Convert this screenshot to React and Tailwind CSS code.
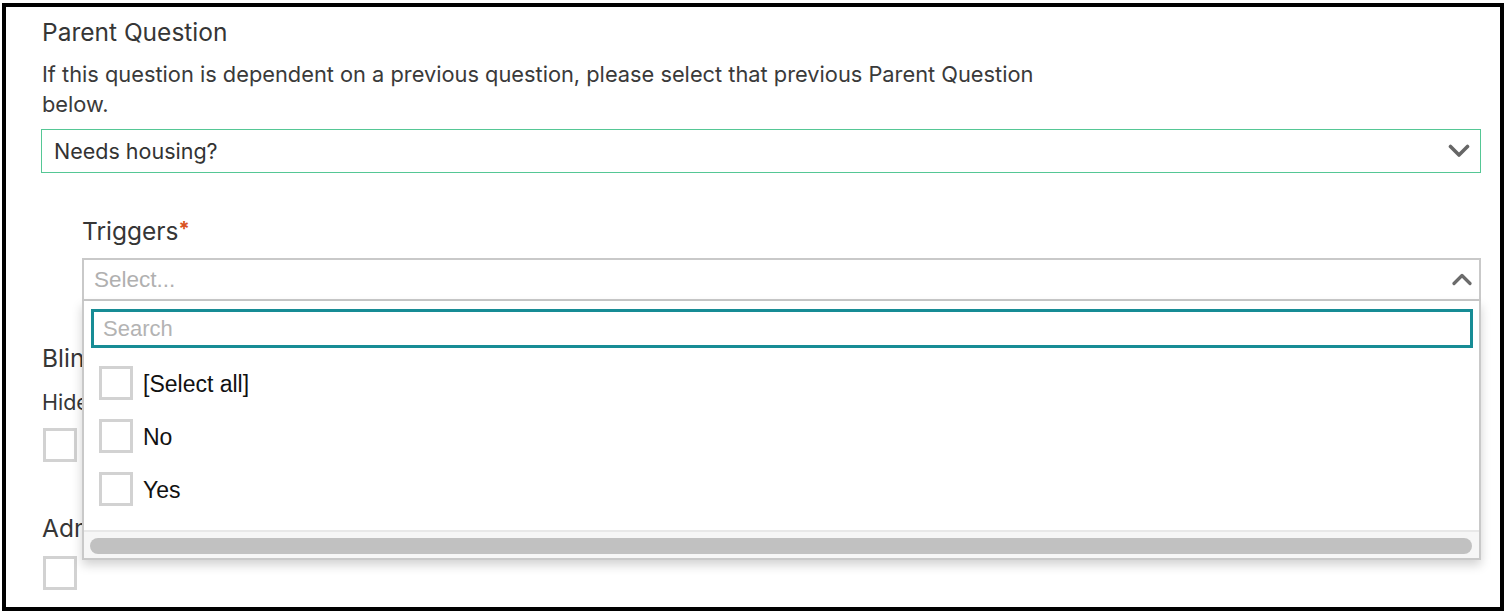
import React from "react";

function ChevronDown() {
  return (
    <svg width="22" height="14" viewBox="0 0 22 14" className="block">
      <polyline points="2.5,2.5 11,11 19.5,2.5" fill="none" stroke="#666666" strokeWidth="3.6" strokeLinecap="round" strokeLinejoin="round" />
    </svg>
  );
}

function ChevronUp() {
  return (
    <svg width="20" height="13" viewBox="0 0 20 13" className="block">
      <polyline points="2,10.5 10,2.5 18,10.5" fill="none" stroke="#6b6b6b" strokeWidth="3.2" strokeLinecap="round" strokeLinejoin="round" />
    </svg>
  );
}

function Box() {
  return <div className="w-[34px] h-[34px] border-[3px] border-[#d2d2d2] bg-white shrink-0" />;
}

export default function App() {
  const sans = { fontFamily: "Inter, 'Noto Sans', sans-serif" };
  const helv = { fontFamily: "'Liberation Sans', Arial, sans-serif" };
  return (
    <div className="w-[1506px] h-[614px] bg-white overflow-hidden">
      <div className="ml-[2px] mt-[3px] w-[1502px] h-[608px] border-4 border-black overflow-hidden">
        <div className="pl-[35px] pt-[9px] text-[#363636]" style={sans}>
          <div className="text-[24.5px] leading-[32px] pl-[1px]">Parent Question</div>
          <div className="mt-[11px] text-[21.8px] leading-[30px] max-w-[1010px] pl-[1px] text-[#3a3a3a]">
            If this question is dependent on a previous question, please select that previous Parent Question below.
          </div>
          <div className="mt-[10px] w-[1440px] h-[44px] border border-[#55c795] flex items-center justify-between pl-[12px] pr-[10px]">
            <span className="text-[21.5px] text-[#333]">Needs housing?</span>
            <ChevronDown />
          </div>

          <div className="relative">
            <div className="ml-[41px] mt-[42px]">
              <div className="text-[24.5px] leading-[32px]">
                Triggers<span className="text-[#d9531e] text-[20px] font-bold align-top leading-[28px]">*</span>
              </div>
              <div className="relative mt-[11px] w-[1399px]">
                <div className="h-[43px] border-2 border-[#c9c9c9] flex items-center justify-between pl-[10px] pr-[7px]">
                  <span className="text-[22.5px] text-[#b0b0b0]" style={helv}>Select...</span>
                  <ChevronUp />
                </div>
                <div className="absolute left-0 right-0 top-full z-10 bg-white border-2 border-t-0 border-[#c9c9c9] shadow-[0_5px_10px_rgba(0,0,0,0.18)]" style={helv}>
                  <div className="pt-[8px] pl-[7px] pr-[6px]">
                    <div className="h-[39px] border-[3px] border-[#178c95] flex items-center pl-[9px]">
                      <span className="text-[22px] text-[#b3b3b3]">Search</span>
                    </div>
                  </div>
                  <div className="pt-[8px] pb-[15px] pl-[15px]">
                    {["[Select all]", "No", "Yes"].map((t) => (
                      <div key={t} className="h-[53px] flex items-center gap-[10px]">
                        <Box />
                        <span className="text-[23px] text-[#111] pt-[3px]">{t}</span>
                      </div>
                    ))}
                  </div>
                  <div className="border-t-2 border-[#e8e8e8] bg-[#f6f6f6] pt-[6px] pb-[4px] pl-[6px] pr-[7px]">
                    <div className="h-[16px] rounded-full bg-[#c1c1c1]" />
                  </div>
                </div>
              </div>
            </div>

            <div className="mt-[41px] text-[24.5px] leading-[32px] pl-[1px]">Blinded</div>
            <div className="mt-[13px] text-[21.5px] leading-[30px] pl-[1px]">Hide this question's answers from reviewers</div>
            <div className="mt-[11px] ml-[2px]"><Box /></div>
            <div className="mt-[50px] text-[24.5px] leading-[32px] pl-[1px]">Admin only</div>
            <div className="mt-[12px] ml-[2px]"><Box /></div>
          </div>
        </div>
      </div>
    </div>
  );
}
